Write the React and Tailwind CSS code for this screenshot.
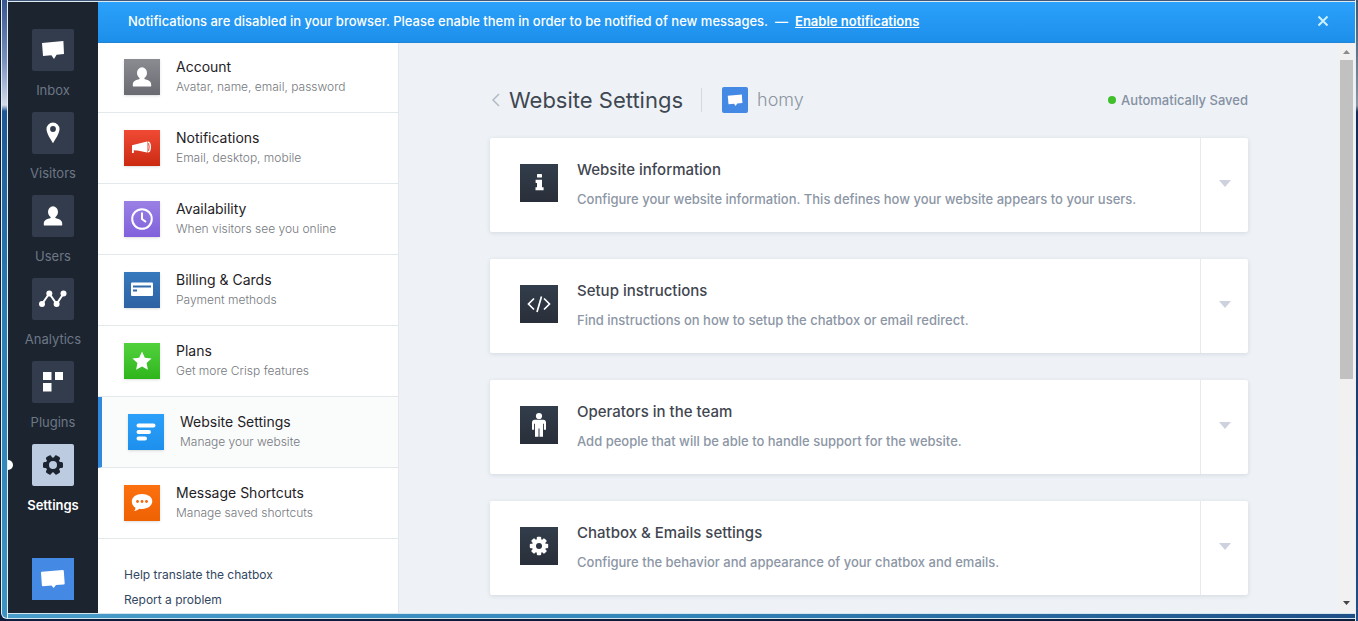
import { useState } from "react";

const HexGear = ({ x, y, hole }) => (
  <g transform={`translate(${x} ${y})`}>
    {[0, 60, 120].map((a) => (
      <rect key={a} x="-10" y="-3" width="20" height="6" rx="1.5" transform={`rotate(${a})`} fill="currentColor" />
    ))}
    <circle r="7.6" fill="currentColor" />
    <circle r="4" fill={hole} />
  </g>
);

const Bubble = ({ className }) => (
  <svg viewBox="0 0 42 42" className={className} fill="currentColor" aria-hidden="true">
    <path d="M9.3 14 32 12 33 26 24.6 26.8 22 30.5 19.4 27.2 10.5 28Z" />
  </svg>
);

const RoundBubble = ({ className }) => (
  <svg viewBox="0 0 42 42" className={className} fill="currentColor" aria-hidden="true">
    <path d="M9 14.8Q8.9 13.9 9.8 13.8L30.8 12Q31.7 12 31.8 12.9L32.7 25.4Q32.7 26.4 31.7 26.5L24 27.1 21.7 30 19.4 27.5 10.9 28.2Q10 28.2 9.9 27.2Z" />
  </svg>
);

const Person = () => (
  <>
    <ellipse cx="21" cy="17" rx="5" ry="5.8" />
    <path d="M18.6 20.5h4.8v2.6c3.4 1 6.8 2 6.8 5.6v1.2c0 .4-.3.6-.6.6H12.4c-.3 0-.6-.2-.6-.6v-1.2c0-3.6 3.4-4.6 6.8-5.6Z" />
  </>
);

const navIcons = {
  Inbox: <path d="M10 13.9 31.4 12 32 25.1 24.6 25.7 22 30 19.4 26.2 11 27Z" />,
  Visitors: (
    <path
      fillRule="evenodd"
      d="M21 10.5a6.5 6.5 0 0 0-6.5 6.5c0 4.5 4.3 10.5 6.5 14.3 2.2-3.8 6.5-9.8 6.5-14.3a6.5 6.5 0 0 0-6.5-6.5Zm0 3.6a2.9 2.9 0 1 1 0 5.8 2.9 2.9 0 0 1 0-5.8Z"
    />
  ),
  Users: <Person />,
  Analytics: (
    <>
      <path d="M10 26 17.3 15.5 24.6 26 31.5 15.5" fill="none" stroke="currentColor" strokeWidth="2" />
      <circle cx="10" cy="26" r="3" />
      <circle cx="17.3" cy="15.5" r="3" />
      <circle cx="24.6" cy="26" r="3" />
      <circle cx="31.5" cy="15.5" r="3" />
    </>
  ),
  Plugins: (
    <>
      <rect x="11" y="11" width="8.5" height="8" />
      <rect x="23" y="11" width="8" height="8" />
      <rect x="11" y="22" width="8.5" height="8.5" />
    </>
  ),
  Settings: <HexGear x={21} y={21} hole="#bccbe0" />,
};

const menu = [
  {
    title: "Account",
    text: "Avatar, name, email, password",
    tile: "from-[#8b8b92] to-[#6a6a72]",
    icon: <g transform="translate(-3 -3)"><Person /></g>,
  },
  {
    title: "Notifications",
    text: "Email, desktop, mobile",
    tile: "from-[#f04a34] to-[#cb2a10]",
    icon: (
      <>
        <path d="M8 15.2 23 11.4V22.4L13.5 20.6 12.8 20.5 9.8 20.3V23H8Z" />
        <path d="M23.5 11.5Q27 11.2 27 17T23.5 22.5Z" />
        <path d="M24.6 13.2Q25.7 17 24.6 20.8" fill="none" stroke="#dc3a20" strokeWidth="1" />
      </>
    ),
  },
  {
    title: "Availability",
    text: "When visitors see you online",
    tile: "from-[#9a80e4] to-[#8161dc]",
    icon: (
      <g fill="none" stroke="currentColor" strokeWidth="2">
        <circle cx="18" cy="18" r="9.8" />
        <path d="M18 11.5V18l4 3" />
      </g>
    ),
  },
  {
    title: "Billing & Cards",
    text: "Payment methods",
    tile: "from-[#3579bd] to-[#2e62a3]",
    icon: (
      <>
        <rect x="7" y="10.5" width="22" height="13.5" rx="1" />
        <path d="M9 14.5h18M9 18.5h4" stroke="#306bae" strokeWidth="1.8" />
      </>
    ),
  },
  {
    title: "Plans",
    text: "Get more Crisp features",
    tile: "from-[#51d23c] to-[#2fb51c]",
    icon: (
      <path d="m18 8.5 2.8 6.2 6.8.8-5 4.6 1.3 6.7-5.9-3.3-5.9 3.3 1.3-6.7-5-4.6 6.8-.8Z" />
    ),
  },
  {
    title: "Website Settings",
    text: "Manage your website",
    tile: "from-[#2ba0fa] to-[#1c90ec]",
    icon: (
      <path d="M10.5 11.5h15M10.5 18h10.5M10.5 24.5h6.5" stroke="currentColor" strokeWidth="4" strokeLinecap="round" />
    ),
  },
  {
    title: "Message Shortcuts",
    text: "Manage saved shortcuts",
    tile: "from-[#fd700f] to-[#ee6204]",
    icon: (
      <>
        <path d="M18 9c5.8 0 10.3 3 10.3 7.3S23.8 24 18 24c-1 0-1.9-.1-2.8-.2-1.5 1.4-3 2.1-5 2.3.9-1 1.3-2 1.2-3.4-2.3-1.4-3.6-3.6-3.6-6.1C7.8 12 12.2 9 18 9Z" />
        <g fill="#f4680a">
          <circle cx="13.5" cy="16.5" r="1.4" />
          <circle cx="18" cy="16.5" r="1.4" />
          <circle cx="22.5" cy="16.5" r="1.4" />
        </g>
      </>
    ),
  },
];

const sections = [
  {
    title: "Website information",
    text: "Configure your website information. This defines how your website appears to your users.",
    icon: (
      <>
        <rect x="17" y="10" width="5" height="3.6" rx=".6" />
        <path d="M15.6 15.8H22V23.2H23.6V26.3H15.5V23.2H17V18.9H15.6Z" />
      </>
    ),
  },
  {
    title: "Setup instructions",
    text: "Find instructions on how to setup the chatbox or email redirect.",
    icon: (
      <path d="M14 13.5 8.5 19l5.5 5.5M24 13.5l5.5 5.5-5.5 5.5M21.5 11.5l-4.5 15.5" fill="none" stroke="currentColor" strokeWidth="1.7" />
    ),
  },
  {
    title: "Operators in the team",
    text: "Add people that will be able to handle support for the website.",
    icon: (
      <>
        <circle cx="19" cy="10" r="3.1" />
        <path d="M14.8 13.8h8.4c1.8 0 2.8 1.2 2.8 2.8v7.2h-2.1v-6h-.9v13h-3.5v-8.3h-1v8.3H15v-13h-.9v6H12v-7.2c0-1.6 1-2.8 2.8-2.8Z" />
      </>
    ),
  },
  {
    title: "Chatbox & Emails settings",
    text: "Configure the behavior and appearance of your chatbox and emails.",
    icon: (
      <g transform="translate(19 19)">
        {[0, 45, 90, 135].map((a) => (
          <rect key={a} x="-9.2" y="-2.2" width="18.4" height="4.4" rx="1" transform={`rotate(${a})`} />
        ))}
        <circle r="7" />
        <circle r="3" fill="#2d3542" />
      </g>
    ),
  },
];

function Rail({ active, onSelect }) {
  return (
    <nav className="flex w-[90px] shrink-0 flex-col items-center bg-[#1c2430] pt-[27px]">
      {Object.keys(navIcons).map((name) => {
        const on = name === active;
        return (
          <button
            key={name}
            onClick={() => onSelect(name)}
            className="relative flex h-[83px] w-full shrink-0 flex-col items-center gap-[9px]"
          >
            {on && <span className="absolute top-4 left-0 h-[10px] w-[5px] rounded-r-full bg-white" />}
            <span className={on ? "rounded-xs bg-[#bccbe0] text-[#1c2430]" : "rounded-xs bg-[#323c4c] text-white"}>
              <svg viewBox="0 0 42 42" className="size-[42px]" fill="currentColor" aria-hidden="true">
                {navIcons[name]}
              </svg>
            </span>
            <span className={on ? "text-[13px] leading-5 font-semibold text-white" : "text-[13px] leading-5 text-[#6d7785]"}>
              {name}
            </span>
          </button>
        );
      })}
      <button aria-label="homy" className="mt-[31px] bg-[#4489e4] text-white">
        <RoundBubble className="size-[42px]" />
      </button>
    </nav>
  );
}

function Sidebar({ active, onSelect }) {
  return (
    <aside className="w-[300px] shrink-0 overflow-hidden bg-white">
      {menu.map((item) => (
        <button
          key={item.title}
          onClick={() => onSelect(item.title)}
          className={
            item.title === active
              ? "flex h-[71px] w-full items-center gap-4 border-b border-l-4 border-b-[#e3e8eb] border-l-[#3288dc] bg-[#fafbfb] pl-[26px] text-left"
              : "flex h-[71px] w-full items-center gap-4 border-b border-[#e3e8eb] pl-[26px] text-left"
          }
        >
          <span className={"bg-linear-to-b text-white shadow-sm " + item.tile}>
            <svg viewBox="0 0 36 36" className="size-9" fill="currentColor" aria-hidden="true">
              {item.icon}
            </svg>
          </span>
          <span className="flex flex-col">
            <span className="text-[14px] leading-5 text-[#1f2226]">{item.title}</span>
            <span className="text-[12px] leading-5 font-light text-[#75797e]">{item.text}</span>
          </span>
        </button>
      ))}
      <div className="flex flex-col gap-[5px] pt-[26px] pl-[26px] text-[12px] leading-5 text-[#33475f]">
        <a href="#translate">Help translate the chatbox</a>
        <a href="#report">Report a problem</a>
      </div>
    </aside>
  );
}

function Section({ title, text, icon }) {
  return (
    <section className="flex h-[94px] shrink-0 rounded-xs bg-white shadow-[0_1px_4px_rgba(70,90,120,0.16)]">
      <div className="flex flex-1 items-start gap-[19px] pl-[30px]">
        <span className="mt-[26px] bg-linear-to-b from-[#323d4b] to-[#292f3a] text-white">
          <svg viewBox="0 0 38 38" className="size-[38px]" fill="currentColor" aria-hidden="true">
            {icon}
          </svg>
        </span>
        <div className="flex flex-col gap-[7px] pt-5">
          <h2 className="text-[15px] leading-6 font-medium text-[#3f4650]">{title}</h2>
          <p className="text-[13px] leading-5 font-medium text-[#8c96a5]">{text}</p>
        </div>
      </div>
      <button aria-label={"Open " + title} className="flex w-12 items-center justify-center border-l border-[#e6eaee] pb-1">
        <svg viewBox="0 0 12 7" className="h-[7px] w-3" fill="#cdd2de" aria-hidden="true">
          <path d="M0 0h12L6 7Z" />
        </svg>
      </button>
    </section>
  );
}

function Scrollbar() {
  return (
    <div className="flex w-[17px] shrink-0 flex-col items-center bg-[#f1f1f1] pt-2 pb-2">
      <svg viewBox="0 0 7 4" className="h-1 w-[7px] shrink-0" fill="#8b8b8b" aria-hidden="true">
        <path d="M0 4h7L3.5 0Z" />
      </svg>
      <div className="mt-[6px] h-[57.5%] w-[13px] bg-[#c1c1c1]" />
      <svg viewBox="0 0 7 4" className="mt-auto h-1 w-[7px] shrink-0" fill="#454545" aria-hidden="true">
        <path d="M0 0h7L3.5 4Z" />
      </svg>
    </div>
  );
}

export default function App() {
  const [page, setPage] = useState("Settings");
  const [entry, setEntry] = useState("Website Settings");
  const [banner, setBanner] = useState(true);

  return (
    <div className="flex h-screen overflow-hidden bg-[#0b1d3a] font-['Inter',sans-serif]">
      {/* Window frame, left edge */}
      <div className="mb-[2px] ml-px w-[7px] shrink-0 rounded-bl-md border-r border-b border-l border-[#e4eff6] bg-[linear-gradient(#38558f_0%,#7b92bf_10%,#d5daea_17%,#1f5796_18%,#2a7cb5_50%,#3f93c3_100%)]" />

      <div className="flex min-w-0 flex-1 flex-col">
        <div className="h-[2px] shrink-0 border-b border-[#dfe9f1] bg-[#40587c]" />

        <div className="flex min-h-0 flex-1">
          <Rail active={page} onSelect={setPage} />

          <div className="flex min-w-0 flex-1 flex-col">
            {banner && (
              <div className="relative z-10 flex h-10 shrink-0 items-center bg-linear-to-b from-[#2ba1fb] to-[#1c8fea] pr-[26px] pb-[2px] pl-[30px] text-[13px] leading-5 font-medium text-white shadow-[0_1px_0_#2185d3]">
                <p>
                  Notifications are disabled in your browser. Please enable them in order to be notified of new
                  messages.
                </p>
                <span className="mx-[7px]">—</span>
                <a href="#enable" className="font-semibold underline">
                  Enable notifications
                </a>
                <button aria-label="Close" onClick={() => setBanner(false)} className="ml-auto">
                  <svg viewBox="0 0 12 12" className="size-3" aria-hidden="true">
                    <path d="m1.5 1.5 9 9m0-9-9 9" stroke="#cdf0ff" strokeWidth="2" />
                  </svg>
                </button>
              </div>
            )}

            <div className="flex min-h-0 flex-1">
              <Sidebar active={entry} onSelect={setEntry} />

              <main className="flex min-w-0 flex-1 flex-col overflow-hidden border-l border-[#e2e8ed] bg-[#eef2f6] pt-[42px] pr-[90px] pl-[91px]">
                <header className="mb-[22px] flex h-8 shrink-0 items-center">
                  <button aria-label="Back" className="mr-[9px]">
                    <svg viewBox="0 0 10 14" className="h-[14px] w-[10px]" fill="none" aria-hidden="true">
                      <path d="M9 1 3 7l6 6" stroke="#b3bac4" strokeWidth="1.5" />
                    </svg>
                  </button>
                  <h1 className="text-[22px] leading-8 text-[#3f4752]">{entry}</h1>
                  <span className="mr-5 ml-[18px] h-6 w-px bg-[#d3d9df]" />
                  <span className="rounded-xs bg-[#4489e4] text-white">
                    <Bubble className="size-[26px]" />
                  </span>
                  <span className="ml-[9px] text-[18px] leading-8 font-light text-[#8d95a2]">homy</span>
                  <span className="ml-auto size-2 rounded-full bg-[#3fbf2a]" />
                  <span className="ml-[5px] text-[13px] leading-5 font-medium text-[#8590a3]">Automatically Saved</span>
                </header>

                <div className="flex flex-col gap-[27px]">
                  {sections.map((s) => (
                    <Section key={s.title} {...s} />
                  ))}
                </div>
              </main>

              <Scrollbar />
            </div>
          </div>
        </div>

        {/* Window frame, bottom edge */}
        <div className="mb-[2px] h-[6px] shrink-0 border-t border-b border-[#d3e6f0] bg-linear-to-r from-[#4a9dca] via-[#3285b8] to-[#1f4f87]" />
      </div>

      <div className="w-[3px] shrink-0 border-l border-[#e4eff6] bg-[linear-gradient(#3d5672_0%,#8694a6_17%,#142c55_18%,#234d84_100%)]" />
    </div>
  );
}
